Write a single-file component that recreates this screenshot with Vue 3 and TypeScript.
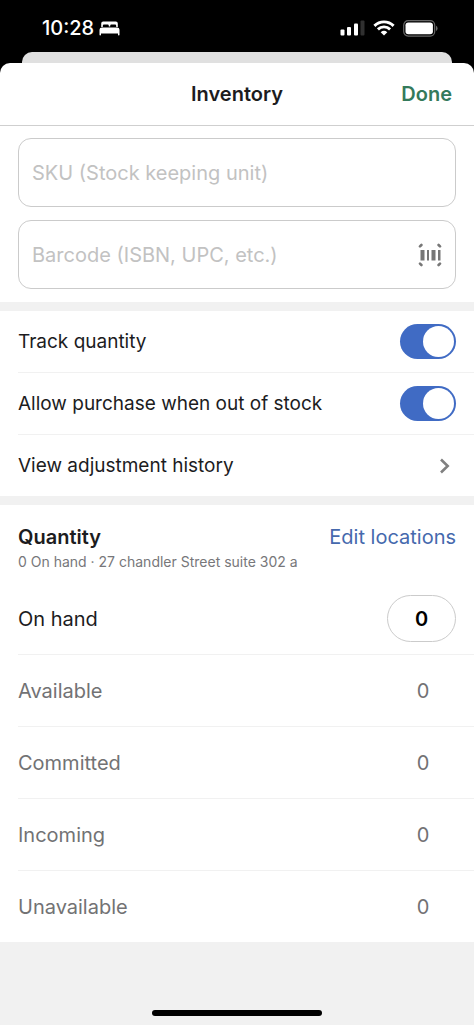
<script setup lang="ts">
import { ref } from 'vue'

interface Stock {
  label: string
  value: number
}

const sku = ref('')
const barcode = ref('')
const trackQuantity = ref(true)
const allowOversell = ref(true)
const onHand = ref('0')

const stock: Stock[] = [
  { label: 'Available', value: 0 },
  { label: 'Committed', value: 0 },
  { label: 'Incoming', value: 0 },
  { label: 'Unavailable', value: 0 },
]
</script>

<template>
  <div class="screen">
    <div class="status">
      <div class="clock">
        <span>10:28</span>
        <svg width="21" height="15" viewBox="0 0 21 15" aria-hidden="true">
          <path fill="#fff" d="M2.2 6V2.4Q2.2.4 4.2.4H16.800Q18.800.4 18.800 2.400V6H17.200V4.700Q17.200 3.500 16 3.500H12.300Q11.200 3.500 11.200 4.700V5.400H9.800V4.700Q9.800 3.500 8.700 3.500H5Q3.800 3.500 3.800 4.700V6Z" />
          <path fill="#fff" d="M.5 8.800Q.5 6.400 3 6.400H18Q20.500 6.400 20.500 8.800V13.800Q20.500 14.400 19.800 14.400Q19 14.400 19 13.800V12.400H2V13.800Q2 14.400 1.200 14.400Q.5 14.400 .5 13.800Z" />
        </svg>
      </div>
      <div class="signals">
        <svg width="25" height="16" viewBox="0 0 25 16" aria-hidden="true">
          <rect x="0.500" y="9.500" width="4" height="6" rx="1" fill="#fff" />
          <rect x="7" y="7" width="4" height="8.500" rx="1" fill="#fff" />
          <rect x="14" y="3.500" width="4" height="12" rx="1" fill="#fff" />
          <rect x="20.500" y="0.500" width="4" height="15" rx="1" fill="#303030" />
        </svg>
        <svg width="22" height="16" viewBox="0 0 22 16" aria-hidden="true">
          <g fill="none" stroke="#fff" stroke-width="2.900">
            <path d="M1.400 5.900Q5.400 1.900 11 1.900T20.600 5.900" />
            <path d="M4.900 9.400Q7.500 6.900 11 6.900T17.100 9.400" />
          </g>
          <path fill="#fff" d="M7.700 12.200Q11 9.300 14.300 12.200L11 15.600Z" />
        </svg>
        <svg width="35" height="17" viewBox="0 0 35 17" aria-hidden="true">
          <rect x="0.700" y="0.700" width="31" height="15.400" rx="4.500" fill="none" stroke="#666" stroke-width="1.200" />
          <rect x="2.500" y="2.500" width="27.400" height="11.800" rx="2.800" fill="#fff" />
          <path fill="#666" d="M33 5.800Q34.600 6.600 34.600 8.400T33 11Z" />
        </svg>
      </div>
    </div>
    <div class="behind"></div>

    <main class="sheet">
      <header class="bar">
        <h1>Inventory</h1>
        <button type="button" class="done">Done</button>
      </header>

      <section class="fields">
        <div class="field">
          <input v-model="sku" type="text" aria-label="SKU" placeholder="SKU (Stock keeping unit)" />
        </div>
        <div class="field">
          <input v-model="barcode" type="text" aria-label="Barcode" placeholder="Barcode (ISBN, UPC, etc.)" />
          <button type="button" class="scan" aria-label="Scan barcode">
            <svg width="24" height="24" viewBox="0 0 24 24" aria-hidden="true">
              <path fill="none" stroke="#777" stroke-width="2.600" stroke-linecap="round" d="M2 3.400L3.400 2M20.600 2L22 3.400M22 20.600L20.600 22M3.400 22L2 20.600" />
              <path fill="#777" d="M2.500 7H6.500V17.500H2.500ZM9 7H11V17.500H9ZM13.500 7H17.500V17.500H13.500ZM20 7H22.500V17.500H20Z" />
            </svg>
          </button>
        </div>
      </section>

      <section class="group settings">
        <div class="row">
          <label for="track">Track quantity</label>
          <input id="track" v-model="trackQuantity" type="checkbox" role="switch" class="switch" />
        </div>
        <div class="row">
          <label for="oversell">Allow purchase when out of stock</label>
          <input id="oversell" v-model="allowOversell" type="checkbox" role="switch" class="switch" />
        </div>
        <a href="#history" class="row">
          <span>View adjustment history</span>
          <svg class="chevron" width="12" height="16" viewBox="0 0 12 16" aria-hidden="true">
            <path fill="none" stroke="#808080" stroke-width="2.600" d="M2 1.500L8.700 8L2 14.500" />
          </svg>
        </a>
      </section>

      <section class="group">
        <div class="heading">
          <div class="title-line">
            <h2>Quantity</h2>
            <a href="#locations" class="edit">Edit locations</a>
          </div>
          <p>0 On hand · 27 chandler Street suite 302 a</p>
        </div>
        <div class="row tall">
          <label for="on-hand">On hand</label>
          <input id="on-hand" v-model="onHand" type="text" inputmode="numeric" class="pill" />
        </div>
        <dl>
          <div v-for="item in stock" :key="item.label" class="row tall muted">
            <dt>{{ item.label }}</dt>
            <dd>{{ item.value }}</dd>
          </div>
        </dl>
      </section>
    </main>

    <footer class="home"><div class="home-bar"></div></footer>
  </div>
</template>

<style>
body {
  margin: 0;
  background: #f1f1f1;
}
</style>

<style scoped>
.screen {
  min-height: 100vh;
  display: flex;
  flex-direction: column;
  background: linear-gradient(#000 96px, #f1f1f1 96px);
  color: #1c1c1e;
  font: 20px/24px Inter, "Liberation Sans", sans-serif;
}
h1, h2, p, dl, dd {
  margin: 0;
  font-size: inherit;
}
button, input {
  font: inherit;
  border: 0;
  padding: 0;
  margin: 0;
  background: none;
  box-sizing: border-box;
}
a {
  color: inherit;
  text-decoration: none;
}
.status {
  height: 52px;
  padding: 4px 36px 0 42px;
  box-sizing: border-box;
  display: flex;
  align-items: center;
  justify-content: space-between;
  color: #fff;
}
.clock {
  display: flex;
  align-items: center;
  gap: 5px;
  font-weight: 500;
}
.signals {
  display: flex;
  align-items: center;
  gap: 8px;
}
.behind {
  height: 11px;
  margin: 0 22px;
  background: #e0e0e0;
  border-radius: 10px 10px 0 0;
}
.sheet {
  background: #fff;
  border-radius: 10px 10px 0 0;
}
.bar {
  height: 63px;
  padding: 0 22px;
  box-sizing: border-box;
  border-bottom: 1px solid #cfcfcf;
  display: grid;
  grid-template-columns: 1fr auto 1fr;
  align-items: center;
}
h1 {
  grid-column: 2;
  font-weight: 600;
}
.done {
  justify-self: end;
  color: #347a5b;
  font-weight: 600;
}
.fields {
  padding: 12px 18px 13px;
  display: flex;
  flex-direction: column;
  gap: 13px;
}
.field {
  height: 69px;
  padding: 0 13px;
  box-sizing: border-box;
  border: 1px solid #cbcbcb;
  border-radius: 13px;
  display: flex;
  align-items: center;
}
.field input {
  flex: 1;
  min-width: 0;
  height: 100%;
}
.field input::placeholder {
  color: #c2c2c2;
  opacity: 1;
}
.scan svg {
  display: block;
}
.group {
  border-top: 9px solid #f1f1f1;
}
.settings {
  font-size: 19px;
}
.row {
  height: 61px;
  margin-left: 18px;
  padding-right: 18px;
  display: flex;
  align-items: center;
  justify-content: space-between;
}
.row + .row,
.muted {
  border-top: 1px solid #f1f1f1;
}
.switch {
  appearance: none;
  width: 56px;
  height: 35px;
  padding: 2px;
  border-radius: 18px;
  background: #c8c8cc;
  display: flex;
}
.switch::before {
  content: "";
  width: 31px;
  height: 31px;
  border-radius: 50%;
  background: #fff;
}
.switch:checked {
  background: #406bc4;
  justify-content: flex-end;
}
.chevron {
  margin-right: 5px;
}
.heading {
  padding: 20px 18px 11px;
}
.title-line {
  display: flex;
  justify-content: space-between;
  margin-bottom: 3px;
}
h2 {
  font-weight: 600;
}
.edit {
  color: #4569ad;
}
p {
  font-size: 14px;
  line-height: 20px;
  color: #77777a;
}
.tall {
  height: 71px;
}
.muted {
  color: #727274;
}
.pill {
  width: 69px;
  height: 47px;
  border: 1px solid #cbcbcb;
  border-radius: 24px;
  text-align: center;
  font-weight: 600;
  color: #000;
}
dd {
  width: 66px;
  text-align: center;
}
.home {
  margin-top: auto;
  padding-bottom: 9px;
  display: flex;
  justify-content: center;
}
.home-bar {
  width: 36%;
  height: 6px;
  border-radius: 3px;
  background: #000;
}
</style>
